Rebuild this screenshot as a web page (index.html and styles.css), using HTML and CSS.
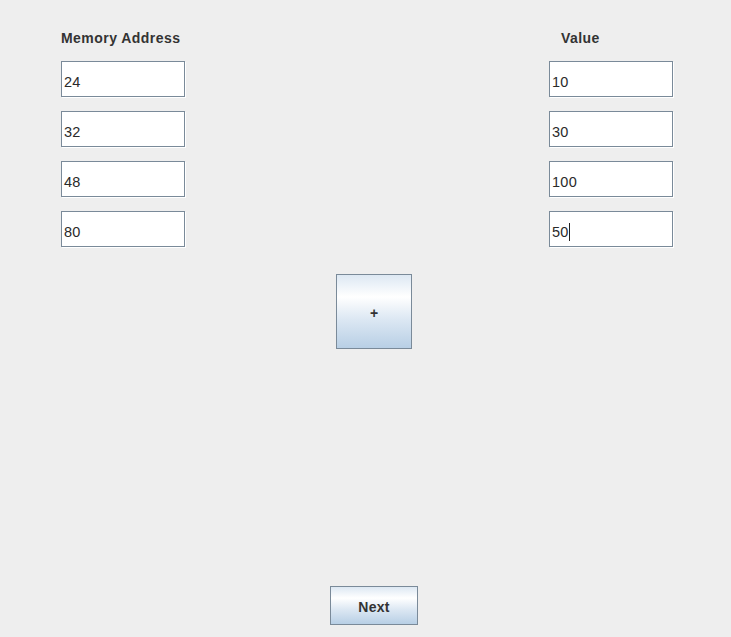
FILE: index.html
```html
<!DOCTYPE html>
<html>
<head>
<meta charset="utf-8">
<link rel="stylesheet" href="styles.css">
</head>
<body>
<div class="app">
  <div class="form">
    <div class="col">
      <div class="label">Memory Address</div>
      <div class="field">24</div>
      <div class="field">32</div>
      <div class="field">48</div>
      <div class="field">80</div>
    </div>
    <div class="col col-right">
      <div class="label label-value">Value</div>
      <div class="field">10</div>
      <div class="field">30</div>
      <div class="field">100</div>
      <div class="field">50<span class="caret"></span></div>
    </div>
  </div>
  <div class="plus-row">
    <button class="btn btn-plus">+</button>
  </div>
  <div class="next-row">
    <button class="btn btn-next">Next</button>
  </div>
</div>
</body>
</html>
```

FILE: styles.css
```css
html, body {
  margin: 0;
  padding: 0;
  background: #eeeeee;
}

.app {
  display: flex;
  flex-direction: column;
  height: 637px;
  font-family: "Liberation Sans", Arial, sans-serif;
  color: #333333;
}

.form {
  display: flex;
  justify-content: space-between;
  padding: 31px 57px 0 61px;
}

.col {
  display: flex;
  flex-direction: column;
  gap: 14px;
  width: 125px;
}

.label {
  font-weight: bold;
  font-size: 14px;
  letter-spacing: 0.45px;
  line-height: 15px;
  height: 15px;
  margin-bottom: 1px;
}

.label-value {
  padding-left: 12px;
}

.field {
  box-sizing: border-box;
  width: 124px;
  height: 36px;
  border: 1px solid #7a8a99;
  background: #ffffff;
  box-shadow: 1px 1px 0 #ffffff;
  font-size: 14.5px;
  letter-spacing: 0.3px;
  color: #2a2a2a;
  padding: 6px 0 0 2px;
  display: flex;
  align-items: center;
}

.caret {
  display: inline-block;
  width: 1px;
  height: 18px;
  background: #222222;
}

.plus-row {
  display: flex;
  padding: 27px 0 0 336px;
}

.next-row {
  display: flex;
  margin-top: auto;
  padding: 0 0 12px 330px;
}

.btn {
  box-sizing: border-box;
  border: 1px solid #7a8a99;
  font-family: "Liberation Sans", Arial, sans-serif;
  font-weight: bold;
  font-size: 14px;
  color: #333333;
  padding: 0;
  background: linear-gradient(to bottom, #dde8f3 0%, #ffffff 30%, #dde8f3 60%, #b8cfe5 100%);
  display: flex;
  align-items: center;
  justify-content: center;
}

.btn-plus {
  width: 76px;
  height: 75px;
  padding-top: 2px;
}

.btn-next {
  width: 88px;
  height: 39px;
  letter-spacing: 0.3px;
  padding-top: 2px;
}
```
